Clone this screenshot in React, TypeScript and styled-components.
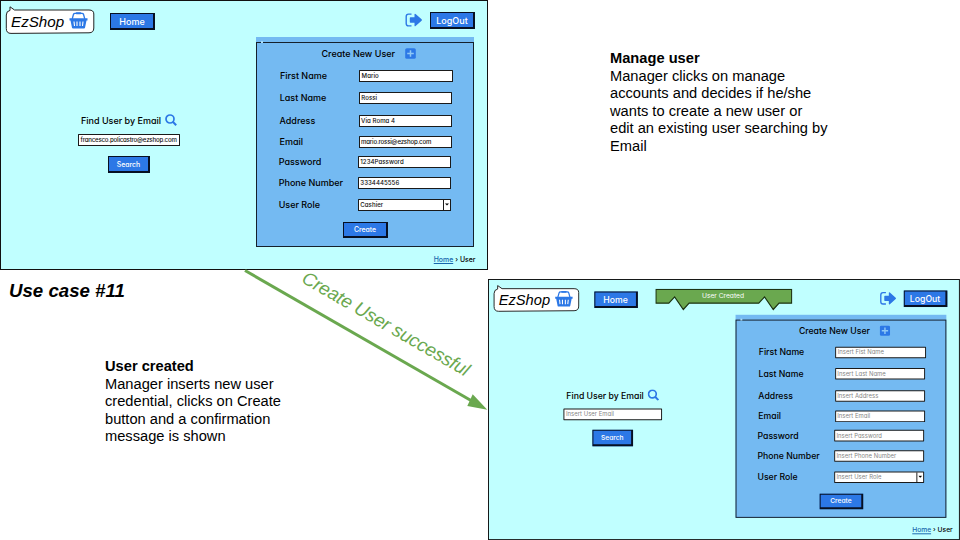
import React from "react";
import styled, { createGlobalStyle } from "styled-components";

const GlobalStyle = createGlobalStyle`
  * { box-sizing: border-box; }
  body { margin: 0; background: #fff; }
`;

const blue = "#2c78e6";

const Slide = styled.main`
  position: relative;
  display: grid;
  grid-template-columns: 488px 472px;
  grid-template-rows: 270px 9px 261px;
  width: 960px;
  height: 540px;
  overflow: hidden;
  background: #fff;
  color: #000;
  font-family: "Liberation Sans", Arial, sans-serif;
`;

const LeftNotes = styled.section`
  grid-row: 2 / 4;
  grid-column: 1;
  padding: 9px 0 0 9px;
`;

const RightNotes = styled.section`
  padding: 50px 0 0 122px;
`;

const UseCase = styled.h1`
  margin: 0;
  font-size: 18.67px;
  line-height: 24px;
  font-style: italic;
  font-weight: 700;
`;

const Note = styled.div<{ $width: number; $top?: number; $left?: number }>`
  width: ${(p) => p.$width}px;
  margin: ${(p) => p.$top ?? 0}px 0 0 ${(p) => p.$left ?? 0}px;
  font-size: 14.67px;
  line-height: 17.6px;
`;

const NoteTitle = styled.div`
  font-weight: 700;
`;

const NoteLine = styled.div`
  white-space: nowrap;
`;

const MockSlot = styled.div<{ $second?: boolean }>`
  grid-column: ${(p) => (p.$second ? 2 : 1)};
  grid-row: ${(p) => (p.$second ? 3 : 1)};
  min-width: 0;
`;

const Screen = styled.div<{ $scale: number }>`
  width: 488px;
  height: 270px;
  transform: scale(${(p) => p.$scale});
  transform-origin: 0 0;
  border: 1.4px solid #111;
  background: #c0ffff;
  display: grid;
  grid-template-columns: 255px 218px;
  grid-template-rows: 36px 210px 20px;
  font-family: Inter, "Noto Sans", sans-serif;
  font-feature-settings: "cv11", "ss03";
`;

const TopBar = styled.header`
  grid-column: 1 / 3;
  display: flex;
  align-items: flex-start;
  width: 474px;
`;

const Logo = styled.div`
  position: relative;
  display: flex;
  width: 90px;
  height: 30px;
  margin: 5px 0 0 4px;
`;

const LogoBubble = styled.svg`
  position: absolute;
  inset: 0;
`;

const LogoText = styled.span`
  position: relative;
  margin: 6.5px 0 0 6px;
  font: italic 15.2px/17px "Liberation Sans", Arial, sans-serif;
`;

const BasketIcon = styled.svg`
  position: relative;
  margin: 6px 0 0 5px;
`;

const Button = styled.button<{ $w: number; $size: number; $gap?: string }>`
  width: ${(p) => p.$w}px;
  height: 16.5px;
  margin: ${(p) => p.$gap ?? "0"};
  padding: 1.5px 0 0;
  border: 1px solid #071022;
  border-right-width: 2px;
  border-bottom-width: 2px;
  background: ${blue};
  color: #fff;
  font: 500 ${(p) => p.$size}px/12px Inter, "Noto Sans", sans-serif;
  font-feature-settings: inherit;
  text-align: center;
  white-space: nowrap;
`;

const BannerSlot = styled.div`
  flex: 1;
  padding: 9.4px 0 0 18px;
`;

const Banner = styled.div`
  position: relative;
  width: 142px;
  height: 23px;
  padding: 4px 2px 0 0;
  color: #fff;
  font-size: 6.9px;
  line-height: 8px;
  text-align: center;
`;

const BannerShape = styled.svg`
  position: absolute;
  inset: 0;
`;

const BannerText = styled.span`
  position: relative;
`;

const ExitIcon = styled.svg`
  margin: 12px 7px 0 0;
  flex: none;
`;

const Finder = styled.section`
  display: flex;
  flex-direction: column;
  align-items: flex-start;
  padding: 76.5px 0 0 77px;
`;

const Heading = styled.div<{ $gap: number; $inset?: number }>`
  display: flex;
  align-items: center;
  gap: ${(p) => p.$gap}px;
  height: 13px;
  padding-left: ${(p) => p.$inset ?? 0}px;
  font-size: 9px;
  font-weight: 500;
  white-space: nowrap;
`;

const Panel = styled.section`
  display: flex;
  flex-direction: column;
  background: #74baf2;
`;

const PanelCap = styled.div`
  height: 4.5px;
  flex: none;
`;

const PanelBody = styled.div`
  position: relative;
  flex: 1;
  border: 1.3px solid #15202c;
  display: flex;
  flex-direction: column;
  &::before {
    content: "";
    position: absolute;
    top: -1.5px;
    left: 4px;
    width: 2px;
    height: 2px;
    background: #a9dcf8;
  }
`;

const Field = styled.div<{ $gap: number; $inset: number }>`
  display: flex;
  align-items: center;
  height: 12px;
  margin: ${(p) => p.$gap}px 0 0 ${(p) => p.$inset}px;
`;

const FieldName = styled.span`
  width: 79px;
  font-size: 9px;
  font-weight: 500;
  line-height: 12px;
  white-space: nowrap;
`;

const Box = styled.span<{ $w: number; $muted?: boolean; $top?: number; $track?: number }>`
  display: flex;
  align-items: center;
  justify-content: space-between;
  width: ${(p) => p.$w}px;
  height: 12px;
  margin-top: ${(p) => p.$top ?? 0}px;
  padding-left: 1.6px;
  border: 1.3px solid #1a1a1a;
  border-radius: 0.5px;
  background: #fff;
  color: ${(p) => (p.$muted ? "#858585" : "#111")};
  font-size: 6.1px;
  font-weight: ${(p) => (p.$muted ? 400 : 500)};
  letter-spacing: ${(p) => p.$track ?? 0.04}px;
  line-height: 8px;
  white-space: nowrap;
`;

const Caret = styled.span`
  display: flex;
  align-items: center;
  justify-content: center;
  width: 7px;
  height: 100%;
  border-left: 1px solid #1a1a1a;
`;

const Crumbs = styled.nav<{ $shift: number }>`
  grid-column: 1 / 3;
  display: flex;
  justify-content: flex-end;
  gap: 2px;
  padding: 7.5px 0 0;
  width: ${(p) => 474.5 + p.$shift}px;
  font-size: 6.9px;
  font-weight: 500;
  line-height: 9px;
`;

const CrumbLink = styled.a`
  color: #1766ad;
  text-decoration: underline;
`;

const Overlay = styled.svg`
  position: absolute;
  left: 0;
  top: 0;
  pointer-events: none;
`;

const ArrowLabel = styled.div`
  position: absolute;
  left: 308.5px;
  top: 266.5px;
  transform: rotate(30deg);
  transform-origin: 0 0;
  color: #6aa84f;
  font-size: 18.67px;
  font-style: italic;
  letter-spacing: -0.13px;
  line-height: 22px;
  white-space: nowrap;
`;

interface FieldData {
  name: string;
  value: string;
  gap: number;
  inset: number;
  select?: boolean;
}

const layout = [
  { name: "First Name", gap: 10.5, inset: 23 },
  { name: "Last Name", gap: 9.5, inset: 22.7 },
  { name: "Address", gap: 11, inset: 22.5 },
  { name: "Email", gap: 9.5, inset: 22.5 },
  { name: "Password", gap: 8.4, inset: 21.7 },
  { name: "Phone Number", gap: 8.6, inset: 21.7 },
  { name: "User Role", gap: 10, inset: 21.7, select: true },
];

const withValues = (values: string[]): FieldData[] =>
  layout.map((l, i) => ({ ...l, value: values[i] }));

const filled = withValues([
  "Mario",
  "Rossi",
  "Via Roma 4",
  "mario.rossi@ezshop.com",
  "1234Password",
  "3334445556",
  "Cashier",
]);

const empty = withValues([
  "Insert Fist Name",
  "Insert Last Name",
  "Insert Address",
  "Insert Email",
  "Insert Password",
  "Insert Phone Number",
  "Insert User Role",
]);

// Addresses are set tighter so that they fit inside their boxes.
const tracking = (text: string) => (text.includes("@") ? -0.2 : undefined);

function ShopLogo() {
  return (
    <Logo>
      <LogoBubble width="90" height="30" viewBox="0 0 90 30">
        <path
          d="M5 .8 L9.5 4 H84 Q88.800 4 88.800 8 V22 Q88.800 26.800 84 26.800 L6 27.400 Q1.300 27.400 1.300 22.500 V9 Q1.300 5 5 4.400 Z"
          fill="#fff"
          stroke="#222"
          strokeWidth="1"
        />
      </LogoBubble>
      <LogoText>EzShop</LogoText>
      <BasketIcon width="19" height="17" viewBox="0 0 19 17">
        <path
          d="M3.200 7 L4.500 2.300 Q4.800 1.400 6 1.400 H13 Q14.200 1.400 14.500 2.300 L15.800 7"
          fill="none"
          stroke={blue}
          strokeWidth="1.3"
        />
        <rect x="6.700" y="0.300" width="5.600" height="2" rx="0.8" fill={blue} />
        <path
          d="M.5 6.300 H18.500 V8.500 H17.500 L16 15.800 Q15.800 16.500 15 16.500 H4 Q3.200 16.500 3 15.800 L1.500 8.500 H.5Z"
          fill={blue}
        />
        <path
          d="M5 9.500 L5.500 14 M8 9.500 V14 M11 9.500 V14 M14 9.500 L13.500 14"
          stroke="#fff"
          strokeWidth="1.1"
        />
      </BasketIcon>
    </Logo>
  );
}

interface MockProps {
  scale: number;
  fields: FieldData[];
  email: string;
  muted?: boolean;
  banner?: string;
  crumbShift?: number;
}

function UserScreen({ scale, fields, email, muted, banner, crumbShift = 0 }: MockProps) {
  return (
    <Screen $scale={scale}>
      <TopBar>
        <ShopLogo />
        <Button $w={45} $size={9} $gap="12px 0 0 15px">Home</Button>
        <BannerSlot>
          {banner && (
            <Banner>
              <BannerShape width="142" height="23" viewBox="0 0 142 23">
                <path
                  d="M.7 .7 H141 V15 H128 L122 21.500 L113 8.500 L107 15 H35 L29 21.500 L20 8.500 L14 15 H.7Z"
                  fill="#6aa84f"
                  stroke="#1d3312"
                  strokeWidth="1.2"
                />
              </BannerShape>
              <BannerText>{banner}</BannerText>
            </Banner>
          )}
        </BannerSlot>
        <ExitIcon width="18" height="14" viewBox="0 0 18 14">
          <path
            d="M6.500 1.100 H3.500 Q1.200 1.100 1.200 3.500 V10.500 Q1.200 12.900 3.500 12.900 H6.500"
            fill="none"
            stroke={blue}
            strokeWidth="1.4"
          />
          <path
            d="M5.500 4.300 H9.500 V1.300 Q9.700 .3 10.600 1 L16.600 6.300 Q17.400 7 16.600 7.700 L10.600 13 Q9.700 13.700 9.500 12.700 V9.700 H5.500 Q4.800 9.700 4.800 9 V5 Q4.800 4.300 5.500 4.300Z"
            fill={blue}
          />
        </ExitIcon>
        <Button $w={45} $size={9} $gap="11px 0 0 0">LogOut</Button>
      </TopBar>

      <Finder>
        <Heading $gap={3.5} $inset={3}>
          <span>Find User by Email</span>
          <svg width="12" height="12" viewBox="0 0 12 12">
            <circle cx="5" cy="5" r="4" fill="none" stroke={blue} strokeWidth="1.7" />
            <path d="M7.800 7.800 L11.200 11.300" stroke={blue} strokeWidth="2" />
          </svg>
        </Heading>
        <Box $w={101.5} $muted={muted} $top={7.5} $track={tracking(email)}>{email}</Box>
        <Button $w={42} $size={6.9} $gap="10px 0 0 30px">Search</Button>
      </Finder>

      <Panel>
        <PanelCap />
        <PanelBody>
          <Field $gap={5} $inset={64.5}>
            <Heading $gap={10}>
              <span>Create New User</span>
              <svg width="11" height="11" viewBox="0 0 11 11">
                <rect x=".2" y=".2" width="10.600" height="10.600" rx="1.6" fill={blue} />
                <path d="M5.500 2.200 V8.800 M2.200 5.500 H8.800" stroke="#8fc8f5" strokeWidth="1.5" />
              </svg>
            </Heading>
          </Field>
          {fields.map((f) => (
            <Field key={f.name} $gap={f.gap} $inset={f.inset}>
              <FieldName>{f.name}</FieldName>
              <Box $w={93.5} $muted={muted} $track={tracking(f.value)}>
                {f.value}
                {f.select && (
                  <Caret>
                    <svg width="4" height="3" viewBox="0 0 4 3">
                      <path d="M0 .4 H4 L2 2.600Z" fill="#000" />
                    </svg>
                  </Caret>
                )}
              </Box>
            </Field>
          ))}
          <Button $w={45} $size={6.9} $gap="11px 0 0 86px">Create</Button>
        </PanelBody>
      </Panel>

      <Crumbs $shift={crumbShift}>
        <CrumbLink>Home</CrumbLink>
        <span>›</span>
        <span>User</span>
      </Crumbs>
    </Screen>
  );
}

export default function App() {
  return (
    <>
      <GlobalStyle />
      <Slide>
        <MockSlot>
          <UserScreen scale={1} fields={filled} email="francesco.policastro@ezshop.com" />
        </MockSlot>
        <RightNotes>
          <Note $width={230}>
            <NoteTitle>Manage user</NoteTitle>
            <NoteLine>Manager clicks on manage</NoteLine>
            <NoteLine>accounts and decides if he/she</NoteLine>
            <NoteLine>wants to create a new user or</NoteLine>
            <NoteLine>edit an existing user searching by</NoteLine>
            <NoteLine>Email</NoteLine>
          </Note>
        </RightNotes>
        <LeftNotes>
          <UseCase>Use case #11</UseCase>
          <Note $width={200} $top={55} $left={96}>
            <NoteTitle>User created</NoteTitle>
            <NoteLine>Manager inserts new user</NoteLine>
            <NoteLine>credential, clicks on Create</NoteLine>
            <NoteLine>button and a confirmation</NoteLine>
            <NoteLine>message is shown</NoteLine>
          </Note>
        </LeftNotes>
        <MockSlot $second>
          <UserScreen
            scale={0.967}
            fields={empty}
            email="Insert User Email"
            muted
            banner="User Created"
            crumbShift={5}
          />
        </MockSlot>
        <Overlay width="960" height="540" viewBox="0 0 960 540">
          <path d="M245 270.500 L471 400.500" stroke="#6aa84f" strokeWidth="3" />
          <path d="M487.300 409.700 L472.700 394.300 L467.300 406Z" fill="#6aa84f" />
        </Overlay>
        <ArrowLabel>Create User successful</ArrowLabel>
      </Slide>
    </>
  );
}
